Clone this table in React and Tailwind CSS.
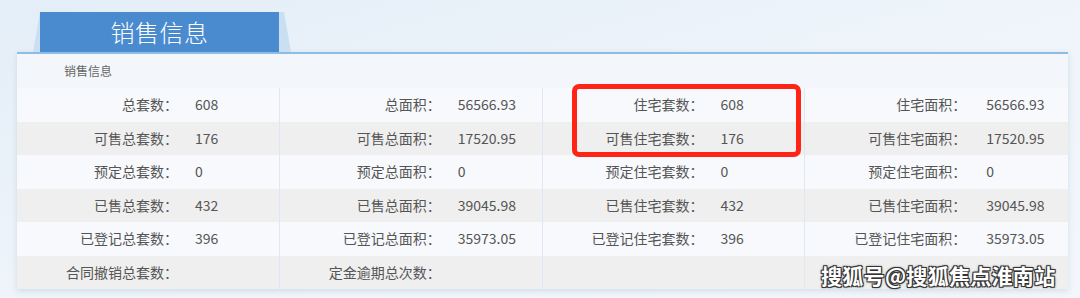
const ROWS = [
  [['总套数', '608'], ['总面积', '56566.93'], ['住宅套数', '608'], ['住宅面积', '56566.93']],
  [['可售总套数', '176'], ['可售总面积', '17520.95'], ['可售住宅套数', '176'], ['可售住宅面积', '17520.95']],
  [['预定总套数', '0'], ['预定总面积', '0'], ['预定住宅套数', '0'], ['预定住宅面积', '0']],
  [['已售总套数', '432'], ['已售总面积', '39045.98'], ['已售住宅套数', '432'], ['已售住宅面积', '39045.98']],
  [['已登记总套数', '396'], ['已登记总面积', '35973.05'], ['已登记住宅套数', '396'], ['已登记住宅面积', '35973.05']],
  [['合同撤销总套数', ''], ['定金逾期总次数', ''], ['', ''], ['', '']],
]

function Cell({ label, value, last }){
  return (
    <div className={`flex items-center h-full ${last ? '' : 'border-r border-[#dde8f3]'}`}>
      <div className="w-[161px] shrink-0 text-right">{label ? `${label}：` : ''}</div>
      <div className={last ? 'pl-[20px]' : 'pl-[17px]'}>{value}</div>
    </div>
  )
}

export default function App(){
  return (
    <div
      className="relative w-[1080px] h-[298px] overflow-hidden bg-gradient-to-br from-[#e4eef8] via-[#eef4fa] to-[#f3f7fb]"
      style={{ fontFamily: '"Noto Sans CJK SC", "Noto Sans", sans-serif' }}
    >
      <div className="pt-[12px] pl-[17px] pr-[12px]">
        {/* tab with slanted shoulders */}
        <div className="ml-[16px] w-[258px] h-[40px] px-[7px] flex bg-[#cadff2] [clip-path:polygon(7px_0,251px_0,258px_100%,0_100%)]">
          <div className="w-[239px] bg-[#4a8bd0] flex items-center justify-center text-white text-[24px] font-light tracking-[0.5px]">
            销售信息
          </div>
        </div>

        <div className="border-t-2 border-[#8dbde3] bg-[#f3f7fb] shadow-[0_2px_6px_rgba(120,150,180,0.25)] text-[14px] text-[#555]">
          <div className="h-[34px] flex items-center pl-[47px] text-[12px] text-[#666]">销售信息</div>
          {ROWS.map((row, i) => (
            <div key={i} className={`grid grid-cols-4 h-[33.5px] ${i % 2 === 0 ? 'bg-[#f7f9fc]' : 'bg-[#efefef]'}`}>
              {row.map(([l, v], j) => (
                <Cell key={j} label={l} value={v} last={j === 3} />
              ))}
            </div>
          ))}
        </div>
      </div>

      {/* red highlight */}
      <div className="absolute left-[572px] top-[84px] w-[229px] h-[73px] border-[5px] border-[#ff2416] rounded-[7px]" />

      {/* watermark */}
      <div
        className="absolute left-[821px] top-[260px] text-white font-bold text-[21px] leading-[30px] tracking-[0.3px]"
        style={{ textShadow: '1px 1px 0 #333, -1px -1px 0 #333, 1px -1px 0 #333, -1px 1px 0 #333, 0 0 3px #000' }}
      >
        搜狐号@搜狐焦点淮南站
      </div>
    </div>
  )
}
